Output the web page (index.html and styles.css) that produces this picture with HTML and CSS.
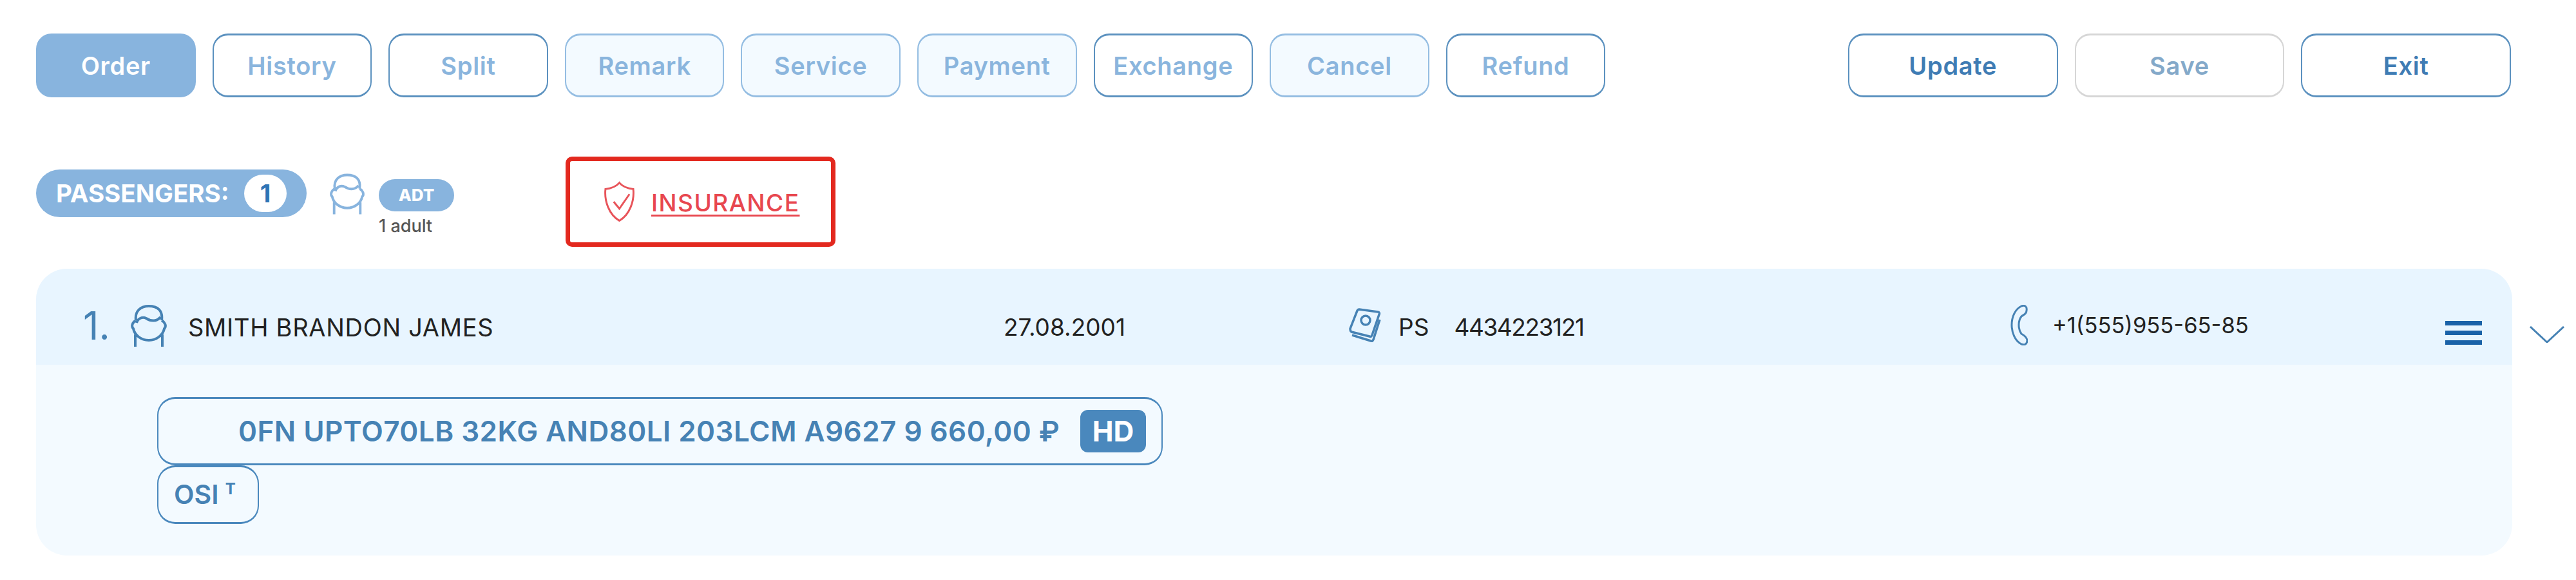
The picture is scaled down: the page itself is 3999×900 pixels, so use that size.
FILE: index.html
```html
<!DOCTYPE html>
<html lang="en">
<head>
  <meta charset="UTF-8" />
  <title>Order</title>
  <link rel="stylesheet" href="styles.css">
</head>
<body>
  <div class="toolbar">
    <div class="tabs">
      <button class="tab active">Order</button>
      <button class="tab">History</button>
      <button class="tab">Split</button>
      <button class="tab soft">Remark</button>
      <button class="tab soft">Service</button>
      <button class="tab soft">Payment</button>
      <button class="tab">Exchange</button>
      <button class="tab soft">Cancel</button>
      <button class="tab">Refund</button>
    </div>
    <div class="actions">
      <button class="action">Update</button>
      <button class="action off">Save</button>
      <button class="action">Exit</button>
    </div>
  </div>

  <div class="summary">
    <div class="pax-pill">
      <span>PASSENGERS:</span>
      <span class="pax-count">1</span>
    </div>
    <svg class="head head-light" viewBox="0 0 60 66">
      <path d="M10 25C8 10 18 3 30 3C44 3 52 10 50 25M11 29C13 22 20 19 26 22C32 26 42 28 48 20M10 25C5 28 2 34 6 38C8 48 18 56 30 56C42 56 52 48 54 38C58 34 55 28 50 25M9 66V47M51 66V47" />
    </svg>
    <div class="pax-type">
      <span class="pax-tag">ADT</span>
      <span class="pax-note">1 adult</span>
    </div>
    <div class="insurance">
      <svg class="shield" viewBox="0 0 50 64">
        <path d="M25 2C20 8 12 11 3 12C1 30 8 52 25 62C42 52 49 30 47 12C38 11 30 8 25 2ZM16 32L25 43L41 20" />
      </svg>
      <a class="insurance-link" href="#">INSURANCE</a>
    </div>
  </div>

  <div class="passenger">
    <div class="card">
      <div class="card-head">
        <div class="cell">
          <span class="num">1.</span>
          <svg class="head head-dark" viewBox="0 0 60 66">
            <path d="M10 25C8 10 18 3 30 3C44 3 52 10 50 25M11 29C13 22 20 19 26 22C32 26 42 28 48 20M10 25C5 28 2 34 6 38C8 48 18 56 30 56C42 56 52 48 54 38C58 34 55 28 50 25M9 66V47M51 66V47" />
          </svg>
          <span class="name">SMITH BRANDON JAMES</span>
        </div>
        <div class="cell"><span class="date">27.08.2001</span></div>
        <div class="cell">
          <svg class="passport" viewBox="0 0 51 53">
            <path d="M16 2L45 6C47 6 48 8 47 10L36 42C35 44 34 45 32 44L4 37C2 36 2 34 2 32L13 4C14 2 15 2 16 2ZM48 18L38 49C37 51 36 52 34 51L5 42" />
            <circle cx="26" cy="19" r="7" />
          </svg>
          <span class="doc-type">PS</span>
          <span class="doc-num">4434223121</span>
        </div>
        <div class="cell">
          <svg class="phone" viewBox="0 0 27 63">
            <path d="M17 2C23 0 26 3 25 9C25 14 21 15 17 18C14 22 13 26 13 31C13 36 14 41 17 45C21 47 25 50 26 55C26 61 22 63 17 61C7 56 2 43 2 31C2 19 7 7 17 2Z" />
          </svg>
          <span class="tel">+1(555)955-65-85</span>
        </div>
        <div class="menu">
          <span></span>
          <span></span>
          <span></span>
        </div>
      </div>
      <div class="card-body">
        <div class="ticket">
          <span class="ticket-text">0FN UPTO70LB 32KG AND80LI 203LCM A9627 9 660,00 ₽</span>
          <span class="ticket-tag">HD</span>
        </div>
        <div class="osi">OSI <sup>T</sup></div>
      </div>
    </div>
    <svg class="chevron" viewBox="0 0 54 26">
      <path d="M1 1L27 25L53 1" />
    </svg>
  </div>
</body>
</html>
```

FILE: styles.css
```css
* {
  margin: 0;
  padding: 0;
  box-sizing: border-box;
  font-family: 'Inter', 'Liberation Sans', sans-serif;
}

body {
  background-color: #fff;
  color: #222;
  padding: 52px 99px 0 56px;
}

.toolbar {
  display: flex;
  justify-content: space-between;
  padding-right: 2px;
}

.tabs,
.actions {
  display: flex;
  gap: 26px;
}

button {
  height: 99px;
  border-style: solid;
  border-width: 3px 2px;
  border-radius: 24px;
  font-size: 38px;
  font-weight: 600;
  letter-spacing: 0.7px;
  background-color: #fff;
}

.tab {
  width: 247.6px;
  border-color: #5b91bf;
  color: #8ab5dd;
}

.tab.active {
  background-color: #88b4de;
  border-color: #88b4de;
  color: #fff;
}

.tab.soft {
  background-color: #f3faff;
  border-color: #94bde2;
}

.action {
  width: 325.7px;
  border-color: #5b91bf;
  color: #3f7cb4;
}

.action.off {
  border-color: #d6d6d6;
  color: #84a9c9;
}

.summary {
  display: flex;
  align-items: flex-start;
  margin-top: 92px;
}

.pax-pill {
  display: flex;
  align-items: center;
  justify-content: space-between;
  width: 420px;
  height: 74px;
  margin-top: 20px;
  padding: 0 31px 0 31px;
  border-radius: 37px;
  background-color: #88b4de;
  color: #fff;
  font-size: 38.5px;
  font-weight: 700;
}

.pax-count {
  width: 66px;
  height: 58px;
  border-radius: 29px;
  background-color: #fff;
  color: #2f74b5;
  text-align: center;
  line-height: 58px;
}

.head {
  fill: none;
  stroke-width: 4;
  flex-shrink: 0;
}

.head-light {
  width: 58px;
  height: 65px;
  margin: 25px 20px 0 34px;
  stroke: #88b4de;
}

.head-dark {
  width: 60px;
  height: 66px;
  stroke: #4682b4;
}

.pax-type {
  display: flex;
  flex-direction: column;
  margin-top: 35px;
}

.pax-tag {
  width: 117px;
  height: 50px;
  border-radius: 25px;
  background-color: #88b4de;
  color: #fff;
  font-size: 26px;
  font-weight: 800;
  text-align: center;
  line-height: 50px;
}

.pax-note {
  margin-top: 6px;
  color: #555;
  font-size: 27px;
  font-weight: 500;
}

.insurance {
  display: flex;
  align-items: center;
  gap: 25px;
  width: 419px;
  height: 140px;
  margin-left: 173px;
  padding-left: 52px;
  border: 7px solid #e3291f;
  border-radius: 10px;
}

.shield {
  width: 49px;
  height: 64px;
  fill: none;
  stroke: #e8545a;
  stroke-width: 3;
}

.insurance-link {
  padding-top: 3px;
  color: #e8474f;
  font-size: 37px;
  font-weight: 500;
  letter-spacing: 1.5px;
  text-underline-offset: 5px;
}

.passenger {
  display: flex;
  margin-top: 34px;
}

.card {
  width: 3844px;
  flex-shrink: 0;
  border-radius: 48px;
  overflow: hidden;
  background-color: #f3faff;
}

.card-head {
  display: grid;
  grid-template-columns: 1429px 536px 1027px 675px 57px;
  align-items: center;
  height: 149px;
  padding: 26px 0 0 73px;
  background-color: #e8f5ff;
}

.cell {
  display: flex;
  align-items: center;
}

.num {
  width: 72px;
  color: #4682b4;
  font-size: 60px;
  font-weight: 400;
}

.name,
.date,
.doc-type,
.doc-num {
  padding-top: 6px;
  font-size: 37px;
  font-weight: 400;
  white-space: nowrap;
}

.name {
  margin-left: 31px;
  font-size: 38px;
  letter-spacing: 0.7px;
}

.passport {
  width: 51px;
  height: 53px;
  fill: none;
  stroke: #4682b4;
  stroke-width: 3.5;
}

.doc-type {
  margin-left: 26px;
}

.doc-num {
  margin-left: 39px;
  letter-spacing: -1.4px;
}

.phone {
  width: 27px;
  height: 63px;
  fill: none;
  stroke: #4682b4;
  stroke-width: 3;
}

.tel {
  margin-left: 38px;
  font-size: 34.5px;
  white-space: nowrap;
}

.menu {
  display: flex;
  flex-direction: column;
  gap: 8px;
  margin-top: 24px;
}

.menu span {
  height: 7px;
  background-color: #1a62a8;
}

.chevron {
  width: 54px;
  height: 26px;
  margin: 89px 0 0 27px;
  flex-shrink: 0;
  fill: none;
  stroke: #4682b4;
  stroke-width: 3;
}

.card-body {
  padding: 50px 0 49px 188px;
}

.ticket {
  display: flex;
  align-items: center;
  justify-content: space-between;
  width: 1561px;
  height: 106px;
  padding: 0 24px 0 124px;
  border: solid #4a88bd;
  border-width: 3px 2px;
  border-radius: 28px;
}

.ticket-text {
  color: #4682b4;
  font-size: 44px;
  font-weight: 600;
  letter-spacing: 0.45px;
  white-space: nowrap;
}

.ticket-tag {
  width: 102px;
  height: 66px;
  border-radius: 12px;
  background-color: #4a88bd;
  color: #fff;
  font-size: 44px;
  font-weight: 700;
  text-align: center;
  line-height: 66px;
}

.osi {
  width: 158px;
  height: 91px;
  padding-left: 24px;
  border: solid #4a88bd;
  border-width: 3px 2px;
  border-radius: 28px;
  color: #4682b4;
  font-size: 41px;
  font-weight: 600;
  line-height: 85px;
}

.osi sup {
  font-size: 24px;
  font-weight: 700;
  line-height: 0;
}
```
